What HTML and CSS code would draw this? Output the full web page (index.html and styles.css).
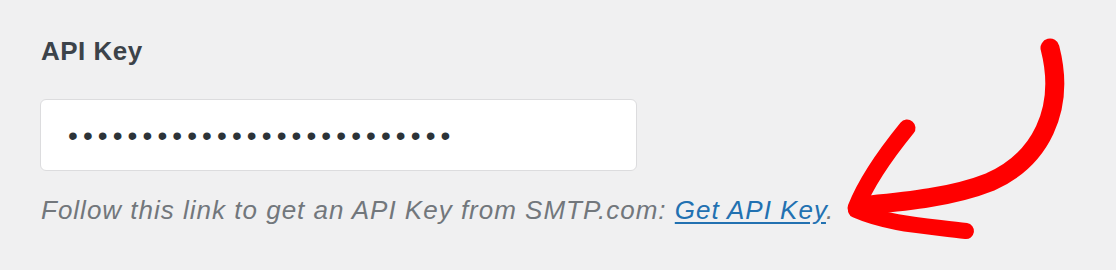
FILE: index.html
```html
<!DOCTYPE html>
<html>
<head>
<meta charset="utf-8">
<link rel="stylesheet" href="styles.css">
</head>
<body>
<div class="page">
  <div class="label">API Key</div>
  <div class="field"><span class="dots">••••••••••••••••••••••••••</span></div>
  <p class="help">Follow this link to get an API Key from SMTP.com: <a href="#" class="link">Get API Key</a>.</p>
  <svg class="arrow" width="1116" height="270" viewBox="0 0 1116 270">
    <g fill="none" stroke="#ff0000" stroke-linecap="round" stroke-linejoin="round">
      <path d="M1050 48 C1066 110 1040 160 990 182 C950 198 900 202 860 206" stroke-width="19"/>
      <path d="M907 128 C885 155 865 185 856 208" stroke-width="17"/>
      <path d="M856 210 C890 225 930 226 966 231" stroke-width="16"/>
    </g>
  </svg>
</div>
</body>
</html>
```
FILE: styles.css
```css
html, body {
  margin: 0;
  padding: 0;
  background: #f0f0f1;
}
.page {
  position: relative;
  width: 1116px;
  height: 270px;
  box-sizing: border-box;
  padding: 36px 0 0 40px;
  font-family: "Liberation Sans", Arial, sans-serif;
  overflow: hidden;
}
.label {
  font-size: 26px;
  line-height: 30px;
  font-weight: bold;
  letter-spacing: 0.5px;
  color: #3c434a;
  margin: 0 0 33px 1px;
}
.field {
  box-sizing: border-box;
  width: 597px;
  height: 72px;
  background: #ffffff;
  border: 1px solid #dcdcde;
  border-radius: 6px;
  display: flex;
  align-items: center;
  padding-left: 27px;
}
.dots {
  font-size: 28px;
  letter-spacing: 5.1px;
  color: #2c3338;
  line-height: 1;
  margin-top: 2px;
}
.help {
  margin: 24px 0 0 1px;
  font-size: 26px;
  line-height: 30px;
  font-style: italic;
  letter-spacing: 1px;
  color: #72777c;
}
.link {
  color: #2271b1;
  text-decoration: underline;
  text-underline-offset: 3px;
}
.arrow {
  position: absolute;
  left: 0;
  top: 0;
  pointer-events: none;
}
```
